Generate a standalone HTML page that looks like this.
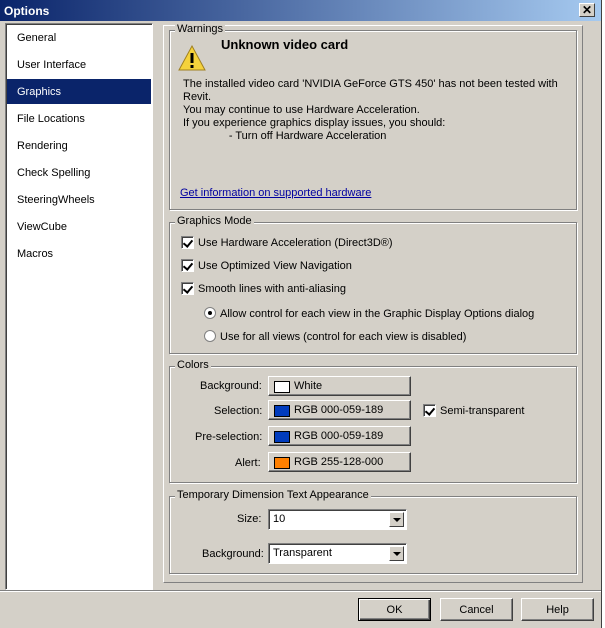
<!DOCTYPE html>
<html><head><style>
*{margin:0;padding:0;box-sizing:border-box}
body{width:605px;height:628px;background:#d4d0c8;font-family:"Liberation Sans",sans-serif;font-size:11px;color:#000;position:relative;overflow:hidden}
.a{position:absolute;white-space:nowrap}
.title{left:0;top:0;width:601px;height:21px;background:linear-gradient(90deg,#0a246a,#a6caf0);color:#fff;font-weight:bold;font-size:12px;padding:4px 0 0 4px}
.gb{position:absolute;border:1px solid #808080;box-shadow:1px 1px 0 #fff inset,1px 1px 0 #fff}
.gl{position:absolute;background:#d4d0c8;padding:0 2px;left:5px;top:-8px}
.cb{position:absolute;width:13px;height:13px;background:#fff;border:1px solid;border-color:#808080 #fff #fff #808080;box-shadow:inset 1px 1px 0 #404040}
.cb::after{content:"";position:absolute;left:3px;top:1px;width:4px;height:7px;border:solid #000;border-width:0 2px 2px 0;transform:rotate(40deg)}
.rb{position:absolute;width:12px;height:12px;border-radius:50%;background:#fff;border:1px solid #808080}
.btn{position:absolute;background:#d4d0c8;border:1px solid;border-color:#fff #404040 #404040 #fff;box-shadow:inset -1px -1px 0 #808080;text-align:center}
.sw{position:absolute;left:5px;top:4px;width:16px;height:12px;border:1px solid #000}
.dd{position:absolute;background:#fff;border:1px solid;border-color:#808080 #fff #fff #808080;box-shadow:inset 1px 1px 0 #404040;padding:3px 4px}
.dd b{position:absolute;right:2px;top:2px;width:15px;height:15px;background:#d4d0c8;border:1px solid;border-color:#fff #404040 #404040 #fff}
.dd b::after{content:"";position:absolute;left:3px;top:5px;border:4px solid transparent;border-top:4px solid #000;border-bottom:0}
</style></head><body>
<div class="a title">Options</div>
<div class="a" style="left:579px;top:3px;width:16px;height:14px;background:#d4d0c8;border:1px solid;border-color:#fff #404040 #404040 #fff;font-size:12px;font-weight:bold;text-align:center;line-height:12px">✕</div>
<div class="a" style="left:601px;top:0;width:4px;height:628px;background:#fff;border-left:1px solid #404040"></div>

<div class="a" style="left:5px;top:23px;width:148px;height:567px;background:#fff;border:1px solid;border-color:#808080 #fff #fff #808080;box-shadow:inset 1px 1px 0 #404040"></div>
<div class="a" style="left:17px;top:32px">General</div>
<div class="a" style="left:17px;top:59px">User Interface</div>
<div class="a" style="left:7px;top:79px;width:144px;height:25px;background:#0a246a"></div>
<div class="a" style="left:17px;top:86px;color:#fff">Graphics</div>
<div class="a" style="left:17px;top:113px">File Locations</div>
<div class="a" style="left:17px;top:140px">Rendering</div>
<div class="a" style="left:17px;top:167px">Check Spelling</div>
<div class="a" style="left:17px;top:194px">SteeringWheels</div>
<div class="a" style="left:17px;top:221px">ViewCube</div>
<div class="a" style="left:17px;top:248px">Macros</div>

<div class="a" style="left:163px;top:25px;width:420px;height:558px;border:1px solid;border-color:#fff #808080 #808080 #fff"></div>

<div class="gb" style="left:169px;top:30px;width:408px;height:180px"><span class="gl">Warnings</span></div>
<svg class="a" style="left:177px;top:44px" width="30" height="28"><polygon points="15,2 28,26 2,26" fill="#f5d23c" stroke="#a08020"/><rect x="13.5" y="9" width="3" height="10" fill="#000"/><rect x="13.5" y="21" width="3" height="3" fill="#000"/></svg>
<div class="a" style="left:221px;top:37px;font-weight:bold;font-size:13px">Unknown video card</div>
<div class="a" style="left:183px;top:78px;line-height:13px">The installed video card 'NVIDIA GeForce GTS 450' has not been tested with<br>Revit.<br>You may continue to use Hardware Acceleration.<br>If you experience graphics display issues, you should:<br>&nbsp;&nbsp;&nbsp;&nbsp;&nbsp;&nbsp;&nbsp;&nbsp;&nbsp;&nbsp;&nbsp;&nbsp;&nbsp;&nbsp;&nbsp;- Turn off Hardware Acceleration</div>
<div class="a" style="left:180px;top:187px;color:#0000a0;text-decoration:underline">Get information on supported hardware</div>

<div class="gb" style="left:169px;top:222px;width:408px;height:132px"><span class="gl">Graphics Mode</span></div>
<div class="cb" style="left:181px;top:236px"></div><div class="a" style="left:198px;top:237px">Use Hardware Acceleration (Direct3D®)</div>
<div class="cb" style="left:181px;top:259px"></div><div class="a" style="left:198px;top:260px">Use Optimized View Navigation</div>
<div class="cb" style="left:181px;top:282px"></div><div class="a" style="left:198px;top:283px">Smooth lines with anti-aliasing</div>
<div class="rb" style="left:204px;top:307px"><div style="position:absolute;left:3px;top:3px;width:4px;height:4px;background:#000;border-radius:50%"></div></div><div class="a" style="left:220px;top:308px">Allow control for each view in the Graphic Display Options dialog</div>
<div class="rb" style="left:204px;top:330px"></div><div class="a" style="left:220px;top:331px">Use for all views (control for each view is disabled)</div>

<div class="gb" style="left:169px;top:366px;width:408px;height:117px"><span class="gl">Colors</span></div>
<div class="a" style="left:200px;top:380px">Background:</div>
<div class="btn" style="left:268px;top:376px;width:143px;height:20px"><div class="sw" style="background:#fff"></div><span class="a" style="left:25px;top:3px">White</span></div>
<div class="a" style="left:214px;top:405px">Selection:</div>
<div class="btn" style="left:268px;top:400px;width:143px;height:20px"><div class="sw" style="background:#003bbd"></div><span class="a" style="left:25px;top:3px">RGB 000-059-189</span></div>
<div class="cb" style="left:423px;top:404px"></div><div class="a" style="left:440px;top:405px">Semi-transparent</div>
<div class="a" style="left:195px;top:431px">Pre-selection:</div>
<div class="btn" style="left:268px;top:426px;width:143px;height:20px"><div class="sw" style="background:#003bbd"></div><span class="a" style="left:25px;top:3px">RGB 000-059-189</span></div>
<div class="a" style="left:235px;top:457px">Alert:</div>
<div class="btn" style="left:268px;top:452px;width:143px;height:20px"><div class="sw" style="background:#ff8000"></div><span class="a" style="left:25px;top:3px">RGB 255-128-000</span></div>

<div class="gb" style="left:169px;top:496px;width:408px;height:78px"><span class="gl">Temporary Dimension Text Appearance</span></div>
<div class="a" style="left:237px;top:513px">Size:</div>
<div class="dd" style="left:268px;top:509px;width:139px;height:21px">10<b></b></div>
<div class="a" style="left:202px;top:548px">Background:</div>
<div class="dd" style="left:268px;top:543px;width:139px;height:21px">Transparent<b></b></div>

<div class="a" style="left:0;top:590px;width:601px;height:2px;border-top:1px solid #808080;border-bottom:1px solid #fff"></div>
<div class="btn" style="left:358px;top:598px;width:73px;height:23px;border:1px solid #000;box-shadow:inset 1px 1px 0 #fff,inset -1px -1px 0 #404040,inset -2px -2px 0 #808080;padding-top:5px">OK</div>
<div class="btn" style="left:440px;top:598px;width:73px;height:23px;padding-top:5px">Cancel</div>
<div class="btn" style="left:521px;top:598px;width:73px;height:23px;padding-top:5px">Help</div>
</body></html>
